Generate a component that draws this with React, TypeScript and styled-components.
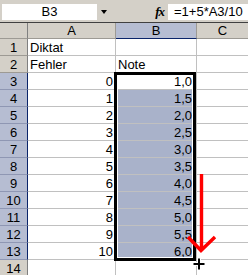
import React from "react";
import styled, { createGlobalStyle } from "styled-components";

const GlobalStyle = createGlobalStyle`
  html, body {
    margin: 0;
    padding: 0;
    background: #ffffff;
  }
  body {
    font-family: "Liberation Sans", Arial, sans-serif;
    font-size: 13px;
  }
  * {
    box-sizing: border-box;
  }
`;

const rows: { a?: string; b?: string; num?: boolean }[] = [
  { a: "Diktat" },
  { a: "Fehler", b: "Note" },
  ...Array.from({ length: 11 }, (_, i) => ({
    a: String(i),
    b: (1 + (5 * i) / 10).toFixed(1).replace(".", ","),
    num: true,
  })),
  {},
];

const isSelected = (r: number) => r >= 3 && r <= 13;

function App() {
  return (
    <>
      <GlobalStyle />
      <Page>
        <FormulaBar>
          <NameBox>B3</NameBox>
          <DropArea>
            <Triangle />
          </DropArea>
          <FxArea>fx</FxArea>
          <FormulaInput>=1+5*A3/10</FormulaInput>
        </FormulaBar>
        <Sheet>
          <Corner />
          <ColHeader>A</ColHeader>
          <ColHeader $active>B</ColHeader>
          <ColHeader $last>C</ColHeader>
          {rows.map((row, i) => {
            const r = i + 1;
            return (
              <React.Fragment key={r}>
                <RowHeader $active={isSelected(r)}>{r}</RowHeader>
                <Cell $num={row.num}>{row.a}</Cell>
                <Cell $num={row.num} $fill={r >= 4 && r <= 13} $inSel>
                  {row.b}
                </Cell>
                <Cell $last />
              </React.Fragment>
            );
          })}
        </Sheet>
        <Selection />
        <Arrow width="35" height="85" viewBox="0 0 35 85">
          <path
            d="M16.5 4 V79 M3 67 L16 80.5 L30 67"
            fill="none"
            stroke="#ff0000"
            strokeWidth="3.4"
            strokeLinecap="butt"
            strokeLinejoin="miter"
          />
        </Arrow>
        <Cursor width="16" height="16" viewBox="0 0 16 16">
          <path
            d="M8 2 V14 M2 8 H14"
            stroke="#ffffff"
            strokeWidth="4"
            fill="none"
          />
          <path
            d="M8 2.5 V13.5 M2.5 8 H13.5"
            stroke="#000000"
            strokeWidth="2"
            fill="none"
          />
        </Cursor>
      </Page>
    </>
  );
}

export default App;

const Page = styled.div`
  position: relative;
  width: 248px;
  height: 275px;
  overflow: hidden;
  background: #ffffff;
`;

const FormulaBar = styled.div`
  display: flex;
  align-items: flex-start;
  height: 23px;
  padding: 4px 0 0 2px;
  background: #d4d0c8;
  border-bottom: 1px solid #404040;
`;

const NameBox = styled.div`
  width: 95px;
  height: 16px;
  background: #ffffff;
  display: flex;
  align-items: center;
  justify-content: center;
  line-height: 16px;
  color: #000;
`;

const DropArea = styled.div`
  width: 13px;
  height: 16px;
  display: flex;
  align-items: center;
  justify-content: center;
`;

const Triangle = styled.div`
  width: 0;
  height: 0;
  border-left: 3.5px solid transparent;
  border-right: 3.5px solid transparent;
  border-top: 4px solid #000;
`;

const FxArea = styled.div`
  width: 58px;
  height: 16px;
  display: flex;
  align-items: center;
  justify-content: flex-end;
  padding-right: 4px;
  font-family: "Liberation Serif", "Times New Roman", serif;
  font-style: italic;
  font-weight: bold;
  font-size: 13px;
  letter-spacing: -1px;
  color: #000;
`;

const FormulaInput = styled.div`
  flex: 1;
  height: 16px;
  background: #ffffff;
  padding-left: 6px;
  line-height: 16px;
  white-space: nowrap;
  color: #000;
`;

const Sheet = styled.div`
  display: grid;
  grid-template-columns: 28px 88px 81px 1fr;
  grid-template-rows: 16px;
  grid-auto-rows: 17px;
`;

const HeaderBase = styled.div`
  background: #d4d0c8;
  border-right: 1px solid #9d9a94;
  border-bottom: 1px solid #9d9a94;
  display: flex;
  align-items: center;
  justify-content: center;
  line-height: 16px;
  color: #000;
`;

const Corner = styled(HeaderBase)`
  border-right-color: #808080;
`;

const ColHeader = styled(HeaderBase)<{ $active?: boolean; $last?: boolean }>`
  background: ${(p) => (p.$active ? "#b6bdd2" : "#d4d0c8")};
  border-bottom-color: ${(p) => (p.$active ? "#0a246a" : "#9d9a94")};
  border-right-width: ${(p) => (p.$last ? "0" : "1px")};
`;

const RowHeader = styled(HeaderBase)<{ $active?: boolean }>`
  background: ${(p) => (p.$active ? "#b6bdd2" : "#d4d0c8")};
  border-right-color: ${(p) => (p.$active ? "#0a246a" : "#808080")};
  border-bottom-color: ${(p) => (p.$active ? "#8f97b3" : "#9d9a94")};
  padding-top: 1px;
`;

const Cell = styled.div<{
  $num?: boolean;
  $fill?: boolean;
  $last?: boolean;
  $inSel?: boolean;
}>`
  background: ${(p) => (p.$fill ? "#a9b2ca" : "#ffffff")};
  border-right: ${(p) => (p.$last ? "0" : "1px solid #c0c0c0")};
  border-bottom: 1px solid #c0c0c0;
  padding: 1px ${(p) => (p.$inSel && p.$num ? "4px" : "2px")} 0 2px;
  line-height: 16px;
  text-align: ${(p) => (p.$num ? "right" : "left")};
  white-space: nowrap;
  overflow: hidden;
  color: #000;
`;

const Selection = styled.div`
  position: absolute;
  left: 114px;
  top: 72px;
  width: 82px;
  height: 189px;
  border: 3px solid #000;
  box-shadow: inset 0 0 0 1px #ffffff;
  pointer-events: none;
`;

const Arrow = styled.svg`
  position: absolute;
  left: 185px;
  top: 170px;
  pointer-events: none;
`;

const Cursor = styled.svg`
  position: absolute;
  left: 190.5px;
  top: 256px;
  pointer-events: none;
`;
